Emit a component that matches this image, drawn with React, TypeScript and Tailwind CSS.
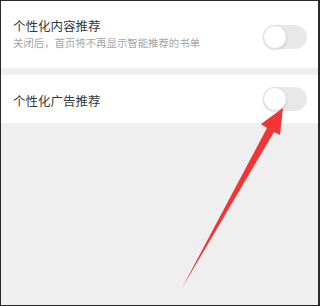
import React from 'react';

function Toggle({ className = '' }: { className?: string }) {
  return (
    <div className={`relative h-[24px] w-[44px] shrink-0 rounded-full bg-[#e8e8e8] ${className}`}>
      <div className="absolute left-0 top-0 h-[24px] w-[24px] rounded-full border border-[#dcdcdc] bg-white shadow-[0_1px_2px_rgba(0,0,0,0.12)]" />
    </div>
  );
}

export default function App() {
  return (
    <div
      className="relative flex h-[306px] w-[320px] flex-col border-y border-l border-r-2 border-[#2a2a2a] bg-[#efefef]"
      style={{ fontFamily: '"Noto Sans CJK SC", "Noto Sans", sans-serif' }}
    >
      {/* content recommendation row */}
      <div className="flex h-[67px] items-center justify-between bg-white pl-[12px] pr-[11px]">
        <div className="flex flex-col pb-[2px]">
          <span className="text-[12.5px] leading-[18px] text-[#383838]">个性化内容推荐</span>
          <span className="mt-[1px] text-[10.4px] leading-[14px] text-[#a5a5a5]">关闭后，首页将不再显示智能推荐的书单</span>
        </div>
        <Toggle className="mt-[4px]" />
      </div>

      <div className="h-[7px]" />

      {/* ad recommendation row */}
      <div className="flex h-[48px] items-center justify-between bg-white pl-[12px] pr-[11px]">
        <span className="pt-[4px] text-[12.5px] leading-[18px] text-[#383838]">个性化广告推荐</span>
        <Toggle />
      </div>

      {/* red pointer arrow */}
      <svg className="absolute left-[-1px] top-[-1px]" width="320" height="306" viewBox="0 0 320 306">
        <polygon
          points="182,288 267,128 261,124 283,108 280,135 274,132"
          fill="#ef3535"
        />
      </svg>
    </div>
  );
}
